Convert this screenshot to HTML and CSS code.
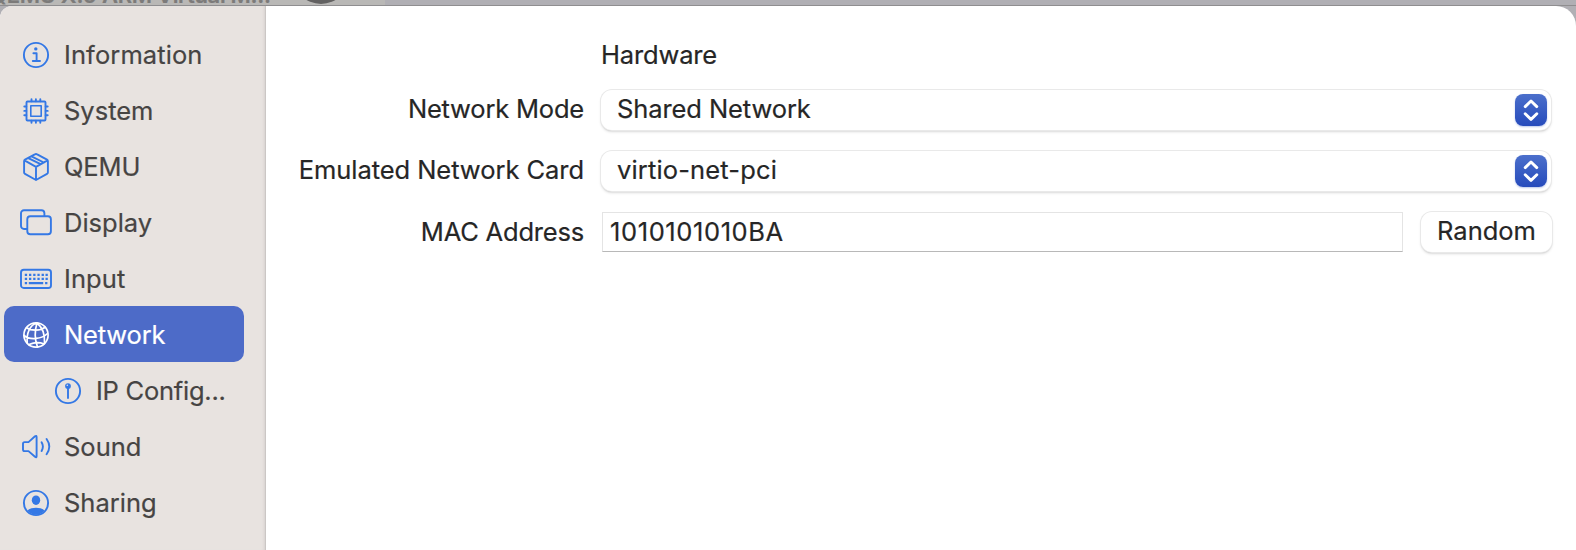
FILE: index.html
```html
<!DOCTYPE html>
<html lang="en">
<head>
<meta charset="utf-8">
<title>Network</title>
<link rel="stylesheet" href="styles.css">
</head>
<body>
<div class="backdrop"><div class="behind"><span class="behind-title">QEMU X.0 ARM Virtual M...</span><span class="behind-dot"></span></div></div>
<div class="window">
<nav class="sidebar">
<a class="item"><svg class="icon" viewBox="0 0 32 32"><circle cx="16" cy="16" r="12.1"/><circle class="solid" cx="15.8" cy="9.9" r="1.7"/><path d="M13.4 14.3H16.6V22M12.8 22H20"/></svg><span class="t-information">Information</span></a>
<a class="item"><svg class="icon" viewBox="0 0 32 32"><rect x="6.5" y="6.5" width="19" height="19" rx="1"/><rect class="core" x="10.8" y="10.8" width="10.4" height="10.4"/><path d="M11.5 4.3v2M15.9 4.3v2M20.3 4.3v2M11.5 25.7v2M15.9 25.7v2M20.3 25.7v2M4.3 11.5h2M4.3 15.9h2M4.3 20.3h2M25.7 11.5h2M25.7 15.9h2M25.7 20.3h2"/></svg><span class="t-system">System</span></a>
<a class="item"><svg class="icon" viewBox="0 0 32 32"><path d="M14.8 3.4Q16 2.7 17.2 3.4L27 8.7Q27.9 9.2 27.9 10.3V21.5Q27.9 22.4 27 22.9L16 29 5 22.9Q4.1 22.4 4.1 21.5V10.3Q4.1 9.2 5 8.7ZM4.5 9.4 16 15.8 27.5 9.4M16 15.8V29M8.3 7.1 20.6 13.2M11.5 5.3 23.8 11.5"/></svg><span class="t-qemu">QEMU</span></a>
<a class="item"><svg class="icon" viewBox="0 0 32 32"><path d="M6.7 22H4a3 3 0 0 1-3-3V6.2a3 3 0 0 1 3-3H21.4a3 3 0 0 1 3 3V9"/><rect x="7.3" y="9.2" width="23.6" height="18" rx="3"/></svg><span class="t-display">Display</span></a>
<a class="item"><svg class="icon" viewBox="0 0 32 32"><rect x="1" y="6.7" width="30" height="18.3" rx="2.8"/><path class="keys" d="M4.8 11.9h2.3m1.9 0h2.3m1.9 0h2.3m1.9 0h2.3m1.9 0h2.3m1.6 0h2.3M4.8 15.9h2.3m1.9 0h2.3m1.9 0h2.3m1.9 0h2.3m1.9 0h2.3m1.6 0h2.3M4.8 20.1h2.3m1.7 0h14.4m1.9 0h2.3"/></svg><span class="t-input">Input</span></a>
<a class="item selected"><svg class="icon" viewBox="0 0 32 32"><circle cx="16" cy="16" r="12.1"/><path d="M6.5 8.7C11 12 20 12 25.3 8.2M4 16.5C10 21.5 22 20 27.5 14.5M9 25.6C14 23.3 20 23.3 24 25M16.7 4C10 6 6.3 14 7.2 24M17 4C14.5 12 14.5 20 17.5 28M17 4C22 8 25 15 24.5 24"/></svg><span class="t-network">Network</span></a>
<a class="item child"><svg class="icon" viewBox="0 0 32 32"><circle cx="16" cy="16" r="12.1"/><circle class="solid" cx="16" cy="11.1" r="2.9"/><path d="M16 12v11"/><circle class="hole" cx="15.3" cy="10.2" r=".8"/></svg><span class="t-ip">IP Config...</span></a>
<a class="item"><svg class="icon" viewBox="0 0 32 32"><path d="M3 12.7a1.6 1.6 0 0 1 1.6-1.6H8.5L15 5.3Q16.6 4.2 16.6 6V25.2Q16.6 27 15 25.8L8.5 20.1H4.6A1.6 1.6 0 0 1 3 18.5ZM21.6 11.2Q24.2 15.6 21.6 20M26.6 8Q32 15.6 26.6 23.3"/></svg><span class="t-sound">Sound</span></a>
<a class="item"><svg class="icon" viewBox="0 0 32 32"><circle cx="16" cy="16" r="12.1"/><ellipse class="solid" cx="16" cy="13.2" rx="4.2" ry="4.8"/><path class="solid" d="M7.6 23.8C10 19.6 22 19.6 24.4 23.8C20 29 12 29 7.6 23.8Z"/></svg><span class="t-sharing">Sharing</span></a>
</nav>
<main class="form">
<div class="heading"><span class="t-hardware">Hardware</span></div>
<label class="label"><span class="t-mode">Network Mode</span></label>
<div class="select"><span class="t-shared">Shared Network</span><svg class="stepper" viewBox="0 0 32 32"><path d="M10.2 12.6 16 7 21.8 12.6M10.2 19.8 16 25.4 21.8 19.8"/></svg></div>
<label class="label"><span class="t-card">Emulated Network Card</span></label>
<div class="select"><span class="t-virtio">virtio-net-pci</span><svg class="stepper" viewBox="0 0 32 32"><path d="M10.2 12.6 16 7 21.8 12.6M10.2 19.8 16 25.4 21.8 19.8"/></svg></div>
<label class="label mac"><span class="t-mac">MAC Address</span></label>
<div class="mac-row"><div class="field"><span class="t-value">1010101010BA</span></div><button class="button"><span class="t-random">Random</span></button></div>
</main>
</div>
</body>
</html>
```
FILE: styles.css
```css
* { box-sizing: border-box; }
body {
  margin: 0; height: 550px; overflow: hidden;
  display: flex; flex-direction: column;
  background: #b0afb4; color: #262626;
  font: 25.5px/40px Inter, "Liberation Sans", sans-serif;
  -webkit-text-stroke: .2px;
  white-space: nowrap;
}
.backdrop { height: 6px; flex: none; overflow: hidden; border-bottom: 1px solid #8f8e90; }
.behind { width: 385px; height: 6px; background: #b9b8b6; display: flex; align-items: flex-end; overflow: hidden; }
.behind-title { width: 303px; flex: none; margin-left: -10px; padding-bottom: 2px; color: #7c7b7a; font-size: 22px; font-weight: 600; letter-spacing: -.3px; line-height: 18px; }
.behind-dot { width: 56px; height: 56px; border-radius: 50%; background: #626161; flex: none; margin-bottom: 2px; }
.window { flex: 1; display: flex; background: #fff; border-radius: 12px 20px 0 0; overflow: hidden; }
.sidebar {
  width: 266px; flex: none; padding: 20px 21px 0 4px; background: #e8e3e0; color: #464443;
  border-right: 1px solid #cbc7c5; box-shadow: inset -3px 0 3px -2px #d6d1cf;
}
.item { display: flex; align-items: center; height: 56px; padding: 1px 0 0 16px; gap: 12px; border-radius: 10px; }
.child { padding-left: 48px; }
.selected { background: #4d6bc8; color: #fff; }
.icon { width: 32px; height: 32px; flex: none; fill: none; stroke: #3478e5; stroke-width: 1.9; stroke-linecap: round; stroke-linejoin: round; }
.selected .icon { stroke: #fff; stroke-width: 1.7; }
.icon .solid { fill: #3478e5; stroke: none; }
.icon .hole { fill: #e8e3e0; stroke: none; }
.icon .core { stroke-width: 1.6; }
.icon .keys { stroke-width: 2.2; stroke-linecap: butt; }
.form {
  flex: 1; padding: 28px 24px 0 32px; display: grid;
  grid-template-columns: 286px 950px; column-gap: 17px;
  grid-template-rows: 56px 61px 61px 42px; align-content: start;
}
.heading { grid-column: 2; line-height: 42px; }
.label { text-align: right; line-height: 38px; }
.mac { line-height: 40px; }
.select {
  height: 40px; display: flex; align-items: center; justify-content: space-between; padding: 0 4px 0 16px;
  line-height: 36px; border-radius: 11px; background: #fff;
  box-shadow: 0 0 0 1px #e9e9e9, 0 1px 1px #b4b4b4, 0 2px 3px #ddd;
}
.select > span { padding-bottom: 2px; }
.stepper {
  width: 32px; height: 32px; border-radius: 8px; background: linear-gradient(#4b6fcb, #264bbc); box-shadow: 0 1px 2px #bcc8eb;
  fill: none; stroke: #fff; stroke-width: 2.9; stroke-linecap: round; stroke-linejoin: round;
}
.mac-row { display: flex; gap: 18px; padding-left: 1px; margin-right: -1px; }
.field { width: 801px; height: 40px; padding-left: 7px; border: 1px solid #e4e4e4; border-bottom-color: #b8b8b8; line-height: 38px; }
.button {
  width: 131px; height: 40px; padding: 0 0 2px; border: 0; border-radius: 11px; background: #fff; color: inherit;
  font: inherit; line-height: 36px; box-shadow: 0 0 0 1px #e9e9e9, 0 1px 1px #b4b4b4, 0 2px 3px #ddd;
}
.t-information, .t-input { letter-spacing: .1px; }
.t-qemu, .t-network, .t-hardware { letter-spacing: -.15px; }
.t-ip { letter-spacing: -.25px; }
.t-mode, .t-mac { letter-spacing: -.2px; }
.t-card { letter-spacing: -.05px; }
.t-shared { letter-spacing: -.1px; }
.t-virtio { letter-spacing: .15px; }
.t-value { letter-spacing: .6px; }
```
